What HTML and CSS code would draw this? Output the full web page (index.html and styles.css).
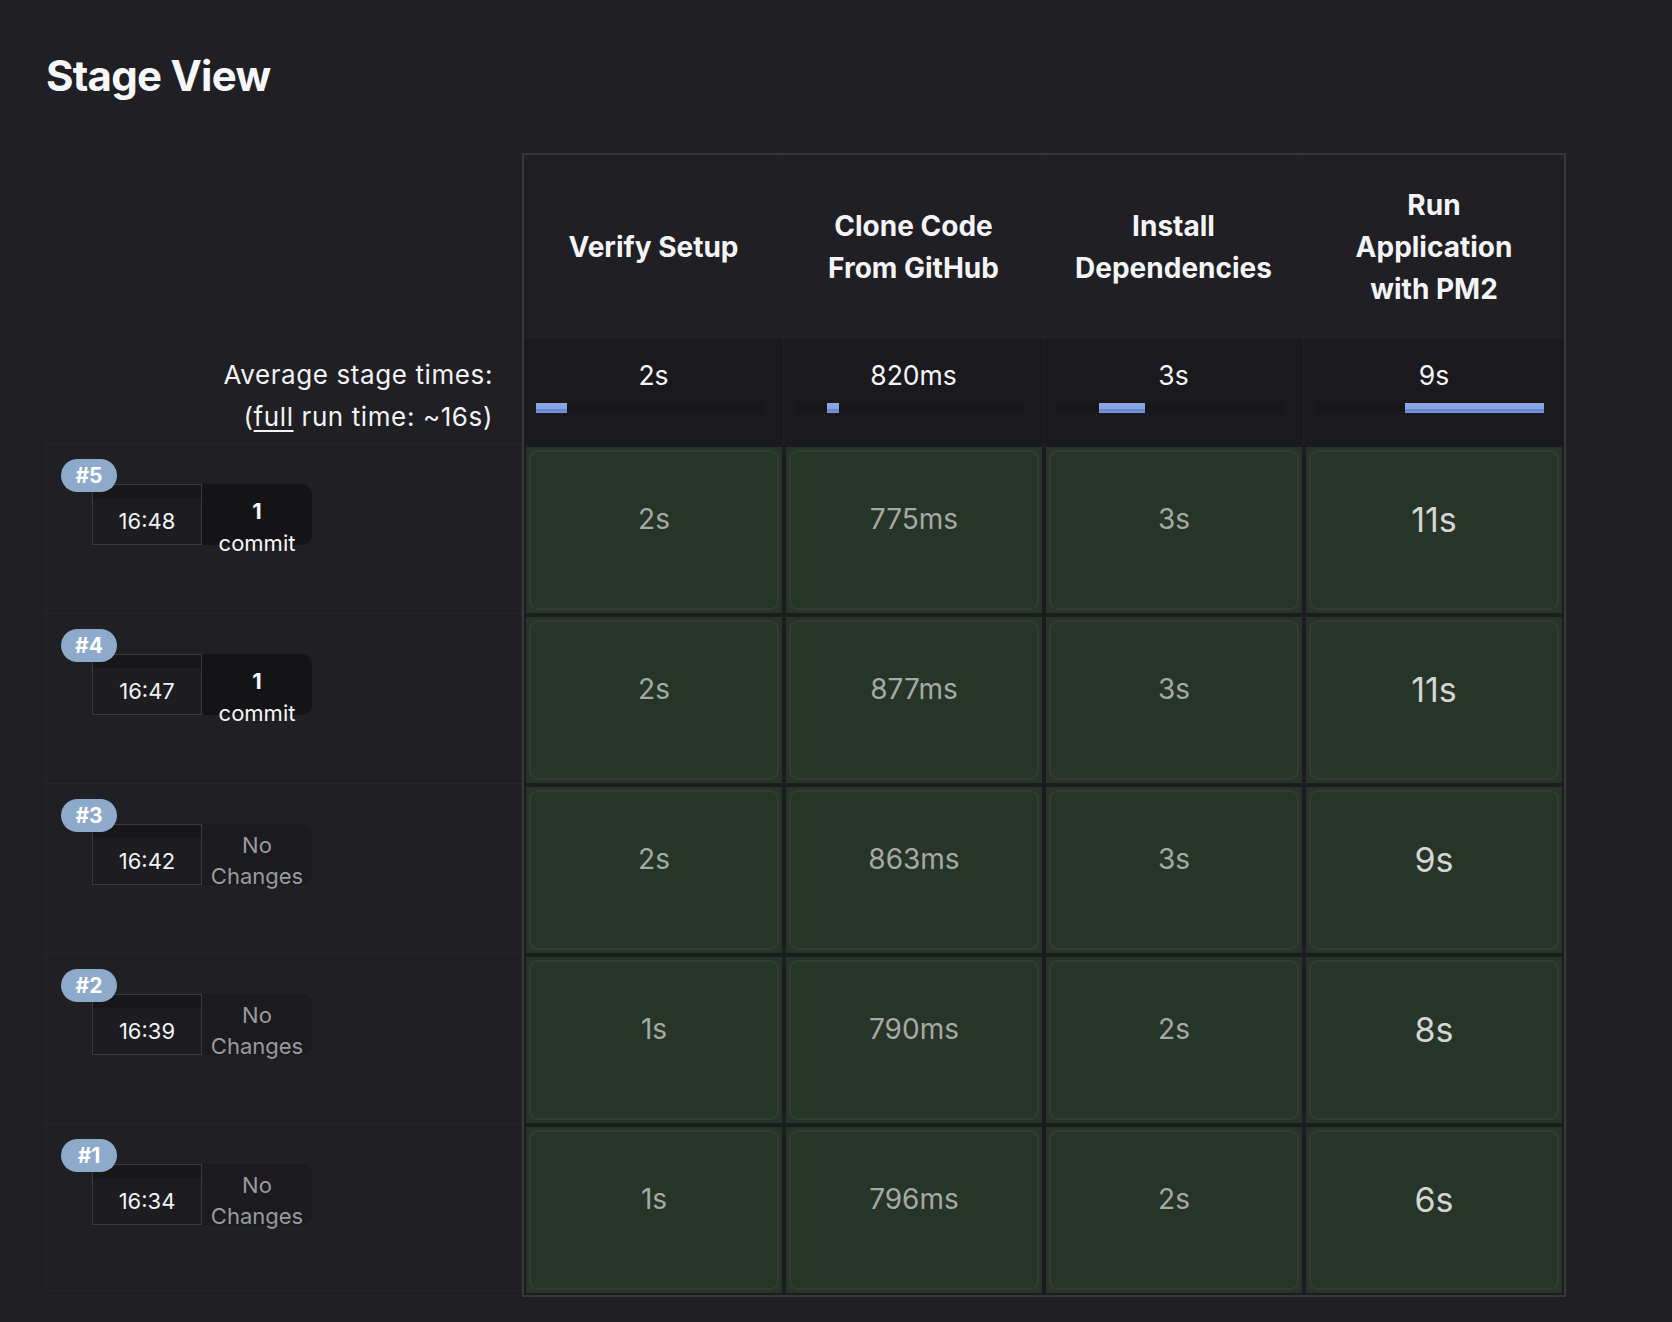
FILE: index.html
```html
<!DOCTYPE html>
<html lang="en">
<head>
<meta charset="utf-8">
<title>Stage View</title>
<link rel="stylesheet" href="styles.css">
</head>
<body>
<div class="page">
  <h1 class="title">Stage View</h1>
  <div class="stage-view">
    <div class="left">
      <div class="left-head"></div>
      <div class="avg-label">Average stage times:<br>(<span class="u">full</span> run time: ~16s)</div>
      <div class="build-row">
        <span class="badge">#5</span>
        <div class="run-info">
          <div class="time-box"><div class="strip"></div><div class="time">16:48</div></div>
          <div class="change-box commit"><b>1</b><span>commit</span></div>
        </div>
      </div>
      <div class="build-row">
        <span class="badge">#4</span>
        <div class="run-info">
          <div class="time-box"><div class="strip"></div><div class="time">16:47</div></div>
          <div class="change-box commit"><b>1</b><span>commit</span></div>
        </div>
      </div>
      <div class="build-row">
        <span class="badge">#3</span>
        <div class="run-info">
          <div class="time-box"><div class="strip"></div><div class="time">16:42</div></div>
          <div class="change-box none"><span>No</span><span>Changes</span></div>
        </div>
      </div>
      <div class="build-row">
        <span class="badge">#2</span>
        <div class="run-info">
          <div class="time-box"><div class="strip"></div><div class="time">16:39</div></div>
          <div class="change-box none"><span>No</span><span>Changes</span></div>
        </div>
      </div>
      <div class="build-row last">
        <span class="badge">#1</span>
        <div class="run-info">
          <div class="time-box"><div class="strip"></div><div class="time">16:34</div></div>
          <div class="change-box none"><span>No</span><span>Changes</span></div>
        </div>
      </div>
    </div>

    <div class="grid">
      <div class="head-row">
        <div class="head-cell"><span>Verify Setup</span></div>
        <div class="head-cell"><span>Clone Code From GitHub</span></div>
        <div class="head-cell"><span>Install Dependencies</span></div>
        <div class="head-cell"><span>Run Application with PM2</span></div>
      </div>
      <div class="avg-row">
        <div class="avg-cell"><div class="avg-val">2s</div><div class="track"><div class="fill" style="left:0px;width:31px"></div></div></div>
        <div class="avg-cell"><div class="avg-val">820ms</div><div class="track"><div class="fill" style="left:31px;width:12px"></div></div></div>
        <div class="avg-cell"><div class="avg-val">3s</div><div class="track"><div class="fill" style="left:43px;width:46px"></div></div></div>
        <div class="avg-cell"><div class="avg-val">9s</div><div class="track"><div class="fill" style="left:89px;width:139px"></div></div></div>
      </div>
      <div class="body-row">
        <div class="cell"><div class="inner">2s</div></div>
        <div class="cell"><div class="inner">775ms</div></div>
        <div class="cell"><div class="inner">3s</div></div>
        <div class="cell"><div class="inner big">11s</div></div>
      </div>
      <div class="body-row">
        <div class="cell"><div class="inner">2s</div></div>
        <div class="cell"><div class="inner">877ms</div></div>
        <div class="cell"><div class="inner">3s</div></div>
        <div class="cell"><div class="inner big">11s</div></div>
      </div>
      <div class="body-row">
        <div class="cell"><div class="inner">2s</div></div>
        <div class="cell"><div class="inner">863ms</div></div>
        <div class="cell"><div class="inner">3s</div></div>
        <div class="cell"><div class="inner big">9s</div></div>
      </div>
      <div class="body-row">
        <div class="cell"><div class="inner">1s</div></div>
        <div class="cell"><div class="inner">790ms</div></div>
        <div class="cell"><div class="inner">2s</div></div>
        <div class="cell"><div class="inner big">8s</div></div>
      </div>
      <div class="body-row">
        <div class="cell"><div class="inner">1s</div></div>
        <div class="cell"><div class="inner">796ms</div></div>
        <div class="cell"><div class="inner">2s</div></div>
        <div class="cell"><div class="inner big">6s</div></div>
      </div>
    </div>
  </div>
</div>
</body>
</html>
```

FILE: styles.css
```css
* { box-sizing: border-box; }

html, body {
  margin: 0;
  padding: 0;
  background: #1f1f24;
}

body {
  font-family: Inter, "Noto Sans", "Liberation Sans", sans-serif;
  color: #f2f2f4;
  width: 1672px;
  height: 1322px;
  overflow: hidden;
}

.page {
  padding: 50px 0 0 46px;
}

.title {
  margin: 0;
  font-size: 42px;
  line-height: 52px;
  font-weight: 700;
  letter-spacing: -0.75px;
  color: #f7f7fa;
}

.stage-view {
  display: flex;
  margin-top: 51px;
}

/* left column */
.left {
  width: 476px;
  display: flex;
  flex-direction: column;
}

.left-head {
  height: 186px;
}

.avg-label {
  height: 104px;
  padding: 15px 29px 0 0;
  text-align: right;
  font-size: 26px;
  line-height: 42px;
  letter-spacing: 0.6px;
  color: #f2f2f4;
}

.u {
  text-decoration: underline;
  text-underline-offset: 4px;
  text-decoration-thickness: 2px;
}

.build-row {
  position: relative;
  height: 170px;
  border: 1px solid #25252a;
  border-bottom: none;
  background: #1f1f24;
  padding: 40px 0 0 45px;
}

.build-row.last {
  border-bottom: 1px solid #25252a;
  height: 168px;
}

.badge {
  position: absolute;
  left: 14px;
  top: 15px;
  z-index: 2;
  width: 56px;
  height: 33px;
  border-radius: 17px;
  background: #8eaacb;
  color: #ffffff;
  font-weight: 700;
  font-size: 21px;
  line-height: 33px;
  text-align: center;
}

.run-info {
  display: flex;
}

.time-box {
  width: 110px;
  height: 61px;
  border: 1px solid #3a3a40;
  background: #1d1d21;
  display: flex;
  flex-direction: column;
}

.strip {
  height: 13px;
  background: #17171a;
}

.time {
  flex: 1;
  display: flex;
  align-items: center;
  justify-content: center;
  font-size: 22px;
  color: #f2f2f4;
}

.change-box {
  width: 110px;
  height: 61px;
  border-radius: 0 10px 10px 0;
  display: flex;
  flex-direction: column;
  align-items: center;
  font-size: 22px;
}

.change-box.commit {
  background: #141417;
  padding-top: 11px;
  line-height: 32px;
  color: #f7f7f9;
}

.change-box.commit b {
  font-weight: 700;
}

.change-box.none {
  background: #1b1b1f;
  padding-top: 6px;
  line-height: 31px;
  color: #9a9a9e;
}

/* right grid */
.grid {
  width: 1044px;
  border: 2px solid #37373c;
  background: #1b1c1f;
}

.head-row, .avg-row, .body-row {
  display: flex;
}

.head-row {
  height: 184px;
  background: #1f1f24;
}

.head-cell {
  width: 260px;
  border-right: 1px solid #222227;
  display: flex;
  align-items: center;
  justify-content: center;
  text-align: center;
  font-size: 28px;
  line-height: 42px;
  font-weight: 700;
  color: #f4f4f6;
}

.head-cell span {
  max-width: 205px;
}

.head-cell:last-child, .avg-cell:last-child {
  border-right: none;
}

.avg-row {
  height: 106px;
  background: #1a1a1e;
}

.avg-cell {
  width: 260px;
  border-right: 1px solid #1f1f24;
  padding-top: 20px;
}

.avg-val {
  text-align: center;
  font-size: 26.5px;
  line-height: 32px;
  color: #f5f5f7;
}

.track {
  position: relative;
  margin: 12px 0 0 12px;
  width: 228px;
  height: 10px;
  background: #17171a;
}

.fill {
  position: absolute;
  top: 0;
  height: 10px;
  background: linear-gradient(#8eabe2 0%, #86a3df 55%, #5f7fd3 70%, #7e9cdd 100%);
}

.body-row {
  height: 170px;
}

.cell {
  width: 260px;
  padding: 2px;
}

.inner {
  height: 100%;
  background: #273428;
  display: flex;
  align-items: center;
  justify-content: center;
  padding-bottom: 22px;
  font-size: 28px;
  color: #a5aaa5;
  position: relative;
}

.inner::before {
  content: "";
  position: absolute;
  inset: 3px;
  border: 2px solid #343b35;
  border-radius: 9px;
  pointer-events: none;
}

.inner.big {
  font-size: 34px;
  color: #d4d6d4;
}
```
